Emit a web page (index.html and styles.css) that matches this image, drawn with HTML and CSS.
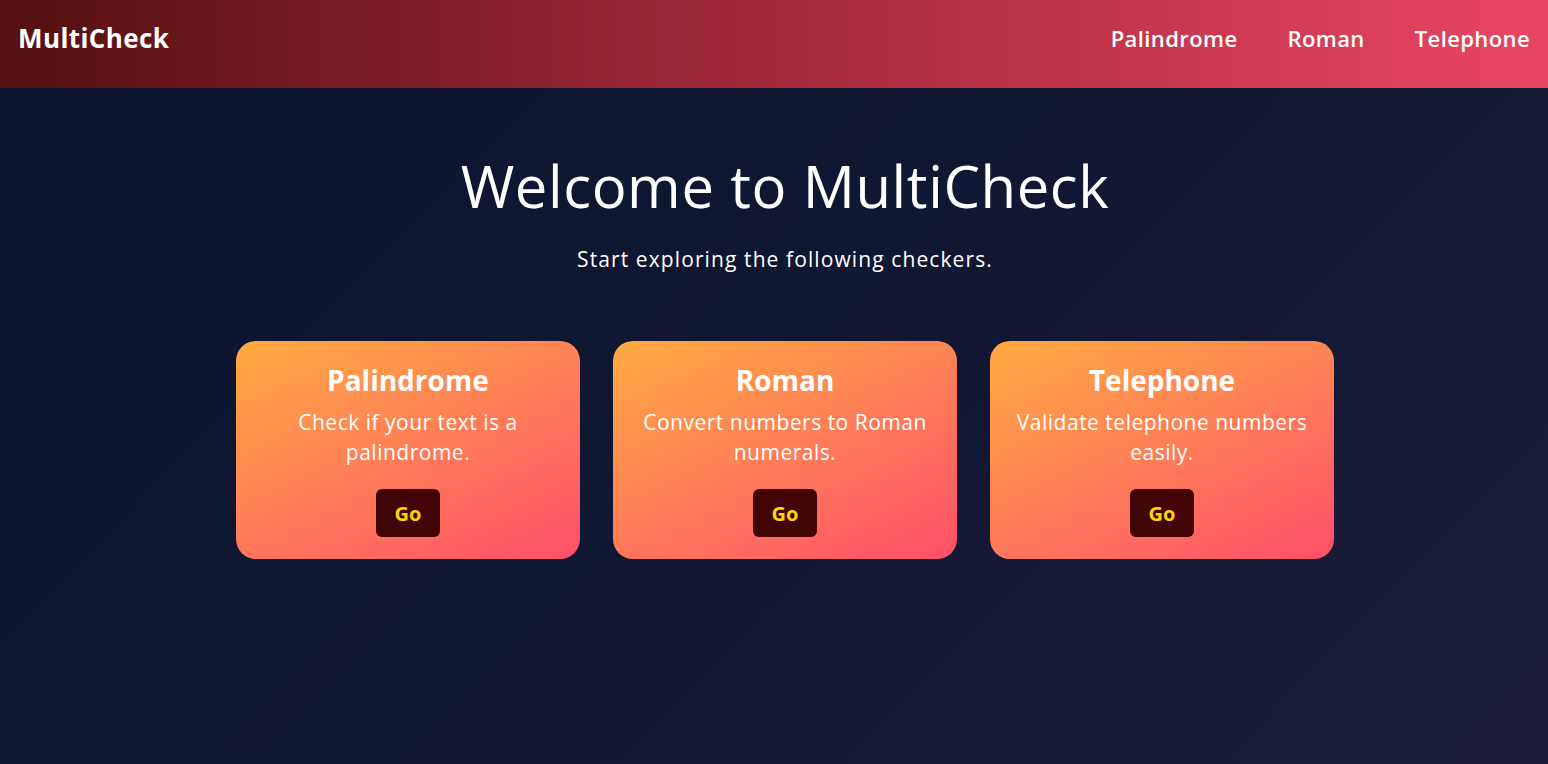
FILE: index.html
```html
<!DOCTYPE html>
<html lang="en">
<head>
<meta charset="utf-8">
<title>MultiCheck</title>
<link rel="stylesheet" href="styles.css">
</head>
<body>
<header class="topbar">
  <div class="logo">MultiCheck</div>
  <nav class="nav">
    <a href="#" class="nav-link">Palindrome</a>
    <a href="#" class="nav-link">Roman</a>
    <a href="#" class="nav-link">Telephone</a>
  </nav>
</header>
<main class="main">
  <h1 class="title">Welcome to MultiCheck</h1>
  <p class="subtitle">Start exploring the following checkers.</p>
  <section class="cards">
    <div class="card">
      <h2 class="card-title">Palindrome</h2>
      <p class="card-text">Check if your text is a palindrome.</p>
      <a href="#" class="go">Go</a>
    </div>
    <div class="card">
      <h2 class="card-title">Roman</h2>
      <p class="card-text">Convert numbers to Roman numerals.</p>
      <a href="#" class="go">Go</a>
    </div>
    <div class="card">
      <h2 class="card-title">Telephone</h2>
      <p class="card-text">Validate telephone numbers easily.</p>
      <a href="#" class="go">Go</a>
    </div>
  </section>
</main>
</body>
</html>
```
FILE: styles.css
```css
* { box-sizing: border-box; }
html, body { margin: 0; padding: 0; height: 100%; }
body {
  font-family: "Open Sans", "Noto Sans", sans-serif;
  background: linear-gradient(135deg, #0b1430 0%, #121834 60%, #1b1d38 100%);
  color: #fff;
  min-height: 764px;
}
.topbar {
  height: 88px;
  display: flex;
  align-items: center;
  justify-content: space-between;
  padding: 0 18px 12px;
  background: linear-gradient(90deg, #541010 0%, #a42a3a 50%, #ea4663 100%);
}
.logo {
  font-size: 26px;
  font-weight: 700;
  letter-spacing: 0.4px;
}
.nav { display: flex; gap: 50px; }
.nav-link {
  color: #fff;
  text-decoration: none;
  font-size: 22px;
  font-weight: 600;
  letter-spacing: 0.4px;
}
.main {
  display: flex;
  flex-direction: column;
  align-items: center;
  padding: 62px 0 0 22px;
}
.title {
  margin: 0;
  font-size: 58px;
  font-weight: 400;
  line-height: 72px;
  letter-spacing: 0.6px;
}
.subtitle {
  margin: 22px 0 0;
  font-size: 21px;
  line-height: 30px;
  letter-spacing: 1.1px;
}
.cards {
  display: flex;
  gap: 33px;
  margin-top: 67px;
}
.card {
  width: 344px;
  height: 218px;
  border-radius: 20px;
  background: linear-gradient(155deg, #ffab40 0%, #ff7e58 50%, #ff4f6a 100%);
  display: flex;
  flex-direction: column;
  align-items: center;
  padding: 20px 20px 0;
  text-align: center;
}
.card-title {
  margin: 0;
  font-size: 28px;
  font-weight: 700;
  line-height: 38px;
}
.card-text {
  margin: 8px 0 0;
  font-size: 21px;
  line-height: 30px;
  letter-spacing: 0.5px;
}
.go {
  margin-top: 22px;
  width: 64px;
  height: 48px;
  border-radius: 6px;
  background: #420505;
  color: #ffd500;
  text-decoration: none;
  font-size: 20px;
  font-weight: 700;
  display: flex;
  align-items: center;
  justify-content: center;
}
```
